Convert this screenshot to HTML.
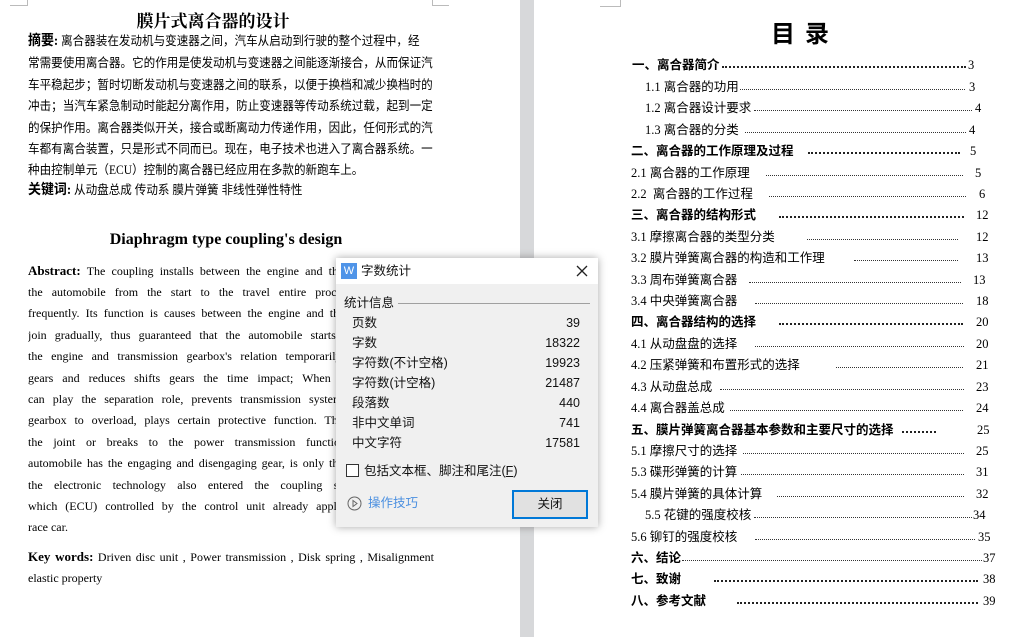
<!DOCTYPE html>
<html><head><meta charset="utf-8">
<style>
*{margin:0;padding:0;box-sizing:border-box}
body{width:1012px;height:637px;overflow:hidden;background:#fff;position:relative;font-family:"Liberation Serif","Noto Serif CJK SC","Noto Sans CJK SC",serif;color:#000}
.a{position:absolute;white-space:nowrap}
.cn{font-family:"Liberation Serif","Noto Sans CJK SC",sans-serif;font-size:12.5px;line-height:16px;transform:scaleX(0.925);transform-origin:0 0}
.en{font-size:12px;line-height:16px;width:406px;left:28px;text-align:justify;text-align-last:justify;overflow:hidden}
.gap{position:absolute;left:520px;top:0;width:14px;height:637px;background:#d7d8da}
.t{position:absolute;font-family:"Liberation Serif","Noto Sans CJK SC",sans-serif;font-size:12.5px;line-height:16px;white-space:nowrap}
.b{font-weight:bold}
.d{position:absolute;height:1px;border-bottom:1px dotted #333}
.db{border-bottom:2px dotted #222}
.dlg{position:absolute;left:336px;top:258px;width:262px;height:269px;background:#f0f0f0;box-shadow:0 0 8px rgba(0,0,0,.35);font-family:"Liberation Sans","Noto Sans CJK SC",sans-serif;font-size:12.5px;color:#111}
.dlg .a{line-height:16px}
.mark{position:absolute;border-color:#bbb;border-style:solid}
</style></head><body>
<div class="mark" style="left:10px;top:0;width:18px;height:6px;border-width:0 1px 1px 0"></div>
<div class="mark" style="left:432px;top:0;width:17px;height:6px;border-width:0 0 1px 1px"></div>
<div class="mark" style="left:600px;top:0;width:21px;height:7px;border-width:0 1px 1px 0"></div>
<div class="gap"></div>

<div class="a" style="left:0;width:426px;text-align:center;top:7px;font-size:17px;font-weight:bold;font-family:'Liberation Serif','Noto Serif CJK SC',serif">膜片式离合器的设计</div>
<div class="a cn" style="left:28px;top:33px"><b style="font-size:14px">摘要:</b> 离合器装在发动机与变速器之间，汽车从启动到行驶的整个过程中，经</div>
<div class="a cn" style="left:28px;top:55px">常需要使用离合器。它的作用是使发动机与变速器之间能逐渐接合，从而保证汽</div>
<div class="a cn" style="left:28px;top:77px">车平稳起步；暂时切断发动机与变速器之间的联系，以便于换档和减少换档时的</div>
<div class="a cn" style="left:28px;top:98px">冲击；当汽车紧急制动时能起分离作用，防止变速器等传动系统过载，起到一定</div>
<div class="a cn" style="left:28px;top:120px">的保护作用。离合器类似开关，接合或断离动力传递作用，因此，任何形式的汽</div>
<div class="a cn" style="left:28px;top:141px">车都有离合装置，只是形式不同而已。现在，电子技术也进入了离合器系统。一</div>
<div class="a cn" style="left:28px;top:162px">种由控制单元（ECU）控制的离合器已经应用在多款的新跑车上。</div>
<div class="a cn" style="left:28px;top:182px"><b style="font-size:14px">关键词:</b> 从动盘总成 传动系 膜片弹簧 非线性弹性特性</div>

<div class="a" style="left:0;width:452px;text-align:center;top:231px;font-size:16px;font-weight:bold">Diaphragm type coupling's design</div>
<div class="a en" style="top:263px"><b style="font-size:13px">Abstract:</b> The coupling installs between the engine and the transmission, the</div>
<div class="a en" style="top:284px">the automobile from the start to the travel entire process, needs to use</div>
<div class="a en" style="top:305px">frequently. Its function is causes between the engine and the transmission can</div>
<div class="a en" style="top:327px">join gradually, thus guaranteed that the automobile starts steadily; cuts off</div>
<div class="a en" style="top:348px">the engine and transmission gearbox's relation temporarily, is advantageous</div>
<div class="a en" style="top:370px">gears and reduces shifts gears the time impact; When automobile brakes</div>
<div class="a en" style="top:391px">can play the separation role, prevents transmission systems and so on the</div>
<div class="a en" style="top:412px">gearbox to overload, plays certain protective function. The coupling similar</div>
<div class="a en" style="top:434px">the joint or breaks to the power transmission function, therefore, any</div>
<div class="a en" style="top:455px">automobile has the engaging and disengaging gear, is only the form is different.</div>
<div class="a en" style="top:477px">the electronic technology also entered the coupling system. One kind</div>
<div class="a en" style="top:498px">which (ECU) controlled by the control unit already applied on many new</div>
<div class="a" style="left:28px;top:519px;font-size:12px;line-height:16px">race car.</div>
<div class="a en" style="top:549px"><b style="font-size:13px">Key words:</b> Driven disc unit , Power transmission , Disk spring , Misalignment</div>
<div class="a" style="left:28px;top:570px;font-size:12px;line-height:16px">elastic property</div>

<div class="a" style="left:771px;top:14px;font-size:24px;font-weight:bold;font-family:'Liberation Sans','Noto Sans CJK SC',sans-serif;letter-spacing:10px">目录</div>

<div class="t b" style="left:632px;top:57px">一、离合器简介</div><div class="d db" style="left:722px;top:66px;width:244px"></div><div class="t" style="left:968px;top:57px">3</div>
<div class="t" style="left:645px;top:79px">1.1 离合器的功用</div><div class="d" style="left:740px;top:89px;width:225px"></div><div class="t" style="left:969px;top:79px">3</div>
<div class="t" style="left:645px;top:100px">1.2 离合器设计要求</div><div class="d" style="left:754px;top:110px;width:218px"></div><div class="t" style="left:975px;top:100px">4</div>
<div class="t" style="left:645px;top:122px">1.3 离合器的分类</div><div class="d" style="left:745px;top:132px;width:221px"></div><div class="t" style="left:969px;top:122px">4</div>
<div class="t b" style="left:631px;top:143px">二、离合器的工作原理及过程</div><div class="d db" style="left:808px;top:152px;width:152px"></div><div class="t" style="left:970px;top:143px">5</div>
<div class="t" style="left:631px;top:165px">2.1 离合器的工作原理</div><div class="d" style="left:766px;top:175px;width:197px"></div><div class="t" style="left:975px;top:165px">5</div>
<div class="t" style="left:631px;top:186px">2.2 &nbsp;离合器的工作过程</div><div class="d" style="left:769px;top:196px;width:197px"></div><div class="t" style="left:979px;top:186px">6</div>
<div class="t b" style="left:631px;top:207px">三、离合器的结构形式</div><div class="d db" style="left:779px;top:216px;width:185px"></div><div class="t" style="left:976px;top:207px">12</div>
<div class="t" style="left:631px;top:229px">3.1 摩擦离合器的类型分类</div><div class="d" style="left:807px;top:239px;width:151px"></div><div class="t" style="left:976px;top:229px">12</div>
<div class="t" style="left:631px;top:250px">3.2 膜片弹簧离合器的构造和工作理</div><div class="d" style="left:854px;top:260px;width:104px"></div><div class="t" style="left:976px;top:250px">13</div>
<div class="t" style="left:631px;top:272px">3.3 周布弹簧离合器</div><div class="d" style="left:749px;top:282px;width:212px"></div><div class="t" style="left:973px;top:272px">13</div>
<div class="t" style="left:631px;top:293px">3.4 中央弹簧离合器</div><div class="d" style="left:755px;top:303px;width:208px"></div><div class="t" style="left:976px;top:293px">18</div>
<div class="t b" style="left:631px;top:314px">四、离合器结构的选择</div><div class="d db" style="left:779px;top:323px;width:184px"></div><div class="t" style="left:976px;top:314px">20</div>
<div class="t" style="left:631px;top:336px">4.1 从动盘盘的选择</div><div class="d" style="left:755px;top:346px;width:209px"></div><div class="t" style="left:976px;top:336px">20</div>
<div class="t" style="left:631px;top:357px">4.2 压紧弹簧和布置形式的选择</div><div class="d" style="left:836px;top:367px;width:127px"></div><div class="t" style="left:976px;top:357px">21</div>
<div class="t" style="left:631px;top:379px">4.3 从动盘总成</div><div class="d" style="left:720px;top:389px;width:244px"></div><div class="t" style="left:976px;top:379px">23</div>
<div class="t" style="left:631px;top:400px">4.4 离合器盖总成</div><div class="d" style="left:730px;top:410px;width:233px"></div><div class="t" style="left:976px;top:400px">24</div>
<div class="t b" style="left:631px;top:422px">五、膜片弹簧离合器基本参数和主要尺寸的选择</div><div class="d db" style="left:902px;top:431px;width:34px"></div><div class="t" style="left:977px;top:422px">25</div>
<div class="t" style="left:631px;top:443px">5.1 摩擦尺寸的选择</div><div class="d" style="left:743px;top:453px;width:221px"></div><div class="t" style="left:976px;top:443px">25</div>
<div class="t" style="left:631px;top:464px">5.3 碟形弹簧的计算</div><div class="d" style="left:741px;top:474px;width:223px"></div><div class="t" style="left:976px;top:464px">31</div>
<div class="t" style="left:631px;top:486px">5.4 膜片弹簧的具体计算</div><div class="d" style="left:777px;top:496px;width:187px"></div><div class="t" style="left:976px;top:486px">32</div>
<div class="t" style="left:645px;top:507px">5.5 花键的强度校核</div><div class="d" style="left:754px;top:517px;width:218px"></div><div class="t" style="left:973px;top:507px">34</div>
<div class="t" style="left:631px;top:529px">5.6 铆钉的强度校核</div><div class="d" style="left:755px;top:539px;width:220px"></div><div class="t" style="left:978px;top:529px">35</div>
<div class="t b" style="left:631px;top:550px">六、结论</div><div class="d" style="left:682px;top:560px;width:300px"></div><div class="t" style="left:983px;top:550px">37</div>
<div class="t b" style="left:631px;top:571px">七、致谢</div><div class="d db" style="left:714px;top:580px;width:264px"></div><div class="t" style="left:983px;top:571px">38</div>
<div class="t b" style="left:631px;top:593px">八、参考文献</div><div class="d db" style="left:737px;top:602px;width:241px"></div><div class="t" style="left:983px;top:593px">39</div>

<div class="dlg">
 <div style="position:absolute;left:0;top:0;width:262px;height:26px;background:#fff"></div>
 <div style="position:absolute;left:5px;top:5px;width:16px;height:16px;background:#4f94e8;color:#fff;font-size:11px;line-height:16px;text-align:center;font-family:'Liberation Sans',sans-serif">W</div>
 <div class="a" style="left:25px;top:5px">字数统计</div>
 <svg style="position:absolute;left:240px;top:7px" width="12" height="12"><path d="M1 1L11 11M11 1L1 11" stroke="#222" stroke-width="1.3"/></svg>
 <div class="a" style="left:8px;top:37px">统计信息</div>
 <div style="position:absolute;left:62px;top:45px;width:192px;height:1px;background:#a0a0a0"></div>
 <div class="a" style="left:16px;top:57px">页数</div><div class="a" style="right:18px;top:57px">39</div>
 <div class="a" style="left:16px;top:77px">字数</div><div class="a" style="right:18px;top:77px">18322</div>
 <div class="a" style="left:16px;top:97px">字符数(不计空格)</div><div class="a" style="right:18px;top:97px">19923</div>
 <div class="a" style="left:16px;top:117px">字符数(计空格)</div><div class="a" style="right:18px;top:117px">21487</div>
 <div class="a" style="left:16px;top:137px">段落数</div><div class="a" style="right:18px;top:137px">440</div>
 <div class="a" style="left:16px;top:157px">非中文单词</div><div class="a" style="right:18px;top:157px">741</div>
 <div class="a" style="left:16px;top:177px">中文字符</div><div class="a" style="right:18px;top:177px">17581</div>
 <div style="position:absolute;left:10px;top:206px;width:13px;height:13px;border:1px solid #333;background:#fff"></div>
 <div class="a" style="left:28px;top:205px">包括文本框、脚注和尾注(<u>F</u>)</div>
 <svg style="position:absolute;left:11px;top:238px" width="15" height="15"><circle cx="7.5" cy="7.5" r="6.5" fill="none" stroke="#666" stroke-width="1"/><path d="M6 4.5L10 7.5L6 10.5Z" fill="none" stroke="#666"/></svg>
 <div class="a" style="left:32px;top:237px;color:#4a8fe0">操作技巧</div>
 <div style="position:absolute;left:176px;top:232px;width:76px;height:29px;border:2px solid #0078d7;background:#e1e1e1;text-align:center;line-height:25px">关闭</div>
</div>
</body></html>
